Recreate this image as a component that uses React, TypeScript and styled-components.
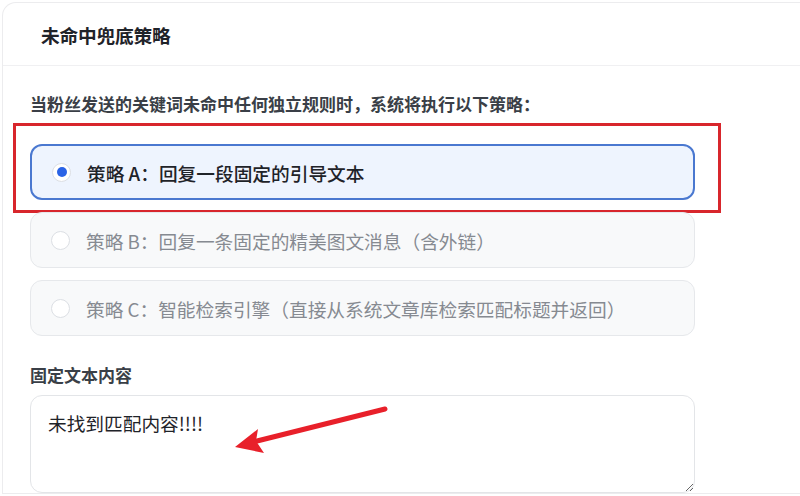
import React from "react";
import styled, { createGlobalStyle } from "styled-components";

const GlobalStyle = createGlobalStyle`
  html, body {
    margin: 0;
    padding: 0;
    background: #ffffff;
    overflow: hidden;
  }
  body {
    font-family: "Noto Sans CJK SC", "Noto Sans", sans-serif;
    color: #1f2329;
  }
`;

// card continues past the right edge of the view, so no right border/corner
const Card = styled.section`
  box-sizing: border-box;
  margin: 2px 0 0 2px;
  width: 798px;
  border: 1px solid #ececee;
  border-right: none;
  border-radius: 14px 0 0 0;
  background: #fff;
`;

const CardHeader = styled.header`
  height: 62px;
  display: flex;
  align-items: center;
  padding-left: 38px;
  border-bottom: 1px solid #f0f0f2;
`;

const Title = styled.h3`
  margin: 0;
  font-size: 18.7px;
  font-weight: 700;
  color: #1f2329;
  letter-spacing: -0.2px;
`;

const CardBody = styled.div`
  padding: 26px 0 0 27px;
  display: flex;
  flex-direction: column;
`;

const Hint = styled.p`
  margin: 0;
  font-size: 17px;
  line-height: 24px;
  font-weight: 700;
  color: #3a3f47;
`;

const OptionList = styled.div`
  margin-top: 28px;
  width: 665px;
  display: flex;
  flex-direction: column;
  gap: 12px;
`;

const Option = styled.label<{ $active?: boolean }>`
  position: relative;
  box-sizing: border-box;
  height: 56px;
  display: flex;
  align-items: center;
  gap: 16px;
  padding-left: 20px;
  border-radius: 12px;
  border: ${(p) => (p.$active ? "2px solid #4a78d0" : "1px solid #e6e8eb")};
  background: ${(p) => (p.$active ? "#eef4fe" : "#f8f9fa")};
  font-size: 18.7px;
  font-weight: ${(p) => (p.$active ? 500 : 400)};
  color: ${(p) => (p.$active ? "#1f2329" : "#868a91")};
  cursor: pointer;
`;

const Radio = styled.span<{ $checked?: boolean }>`
  box-sizing: border-box;
  width: 19px;
  height: 19px;
  border-radius: 50%;
  border: 1px solid #dcdfe4;
  background: #fff;
  display: flex;
  align-items: center;
  justify-content: center;
  flex-shrink: 0;

  &::after {
    content: "";
    width: 10px;
    height: 10px;
    border-radius: 50%;
    background: ${(p) => (p.$checked ? "#2a63e6" : "transparent")};
  }
`;

const Highlight = styled.span`
  position: absolute;
  left: -19px;
  top: -23px;
  right: -28px;
  bottom: -15px;
  border: 3px solid #d8262c;
  pointer-events: none;
`;

const FieldLabel = styled.div`
  margin-top: 27px;
  font-size: 17px;
  line-height: 24px;
  font-weight: 700;
  color: #3a3f47;
`;

const FieldWrap = styled.div`
  position: relative;
  margin-top: 8px;
  width: 665px;
`;

const TextArea = styled.textarea`
  display: block;
  box-sizing: border-box;
  width: 100%;
  height: 98px;
  padding: 12px 17px;
  border: 1px solid #e3e5e8;
  border-radius: 12px;
  font-family: "Noto Sans CJK SC", "Noto Sans", sans-serif;
  font-size: 18.7px;
  line-height: 30px;
  color: #1f2329;
  outline: none;
  resize: vertical;
`;

const Arrow = styled.svg`
  position: absolute;
  left: 195px;
  top: 5px;
  pointer-events: none;
`;

const options = [
  { key: "A", text: "策略 A：回复一段固定的引导文本" },
  { key: "B", text: "策略 B：回复一条固定的精美图文消息（含外链）" },
  { key: "C", text: "策略 C：智能检索引擎（直接从系统文章库检索匹配标题并返回）" },
];

export default function App() {
  const selected = "A";
  return (
    <>
      <GlobalStyle />
      <Card>
        <CardHeader>
          <Title>未命中兜底策略</Title>
        </CardHeader>
        <CardBody>
          <Hint>当粉丝发送的关键词未命中任何独立规则时，系统将执行以下策略：</Hint>
          <OptionList>
            {options.map((o) => (
              <Option key={o.key} $active={o.key === selected}>
                <Radio $checked={o.key === selected} />
                {o.text}
                {o.key === selected && <Highlight />}
              </Option>
            ))}
          </OptionList>
          <FieldLabel>固定文本内容</FieldLabel>
          <FieldWrap>
            <TextArea defaultValue="未找到匹配内容!!!!" />
            <Arrow width="200" height="60" viewBox="0 0 200 60">
              <line
                x1="160"
                y1="9"
                x2="32"
                y2="41"
                stroke="#e8202a"
                strokeWidth="5"
                strokeLinecap="round"
              />
              <polygon points="10,47 33,29 31,41 39,53" fill="#e8202a" />
            </Arrow>
          </FieldWrap>
        </CardBody>
      </Card>
    </>
  );
}
